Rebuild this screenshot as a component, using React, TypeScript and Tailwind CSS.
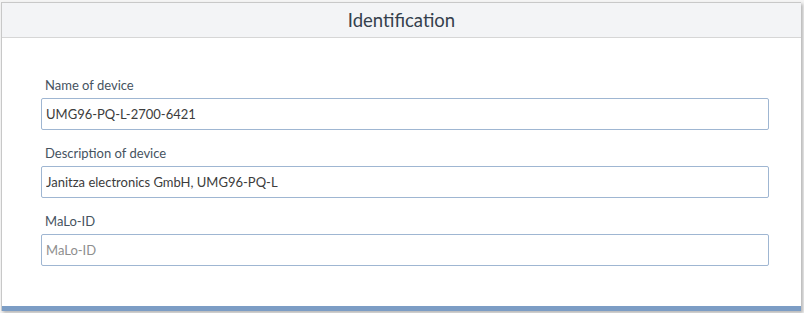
export default function App() {
  const fields = [
    { label: 'Name of device', value: 'UMG96-PQ-L-2700-6421' },
    { label: 'Description of device', value: 'Janitza electronics GmbH, UMG96-PQ-L' },
    { label: 'MaLo-ID', value: '', placeholder: 'MaLo-ID' },
  ];

  return (
    <div className="w-[804px] h-[313px] bg-[#f4f4f4] pt-[2px] pl-[1px] overflow-hidden" style={{ fontFamily: 'Lato, "Open Sans", sans-serif' }}>
      <div className="w-[800px] bg-white border-l border-t border-[#c8c8c8] shadow-[2px_2px_3px_rgba(0,0,0,0.25)] flex flex-col">
        <div className="h-[35px] bg-[#f3f4f6] border-b border-[#d6d6d6] flex items-center justify-center">
          <h2 className="text-[18.5px] text-[#34404c] leading-none">Identification</h2>
        </div>
        <div className="pl-[39px] pr-[32px] pt-[39px] pb-[40px] flex flex-col gap-[15px]">
          {fields.map((f) => (
            <div key={f.label} className="flex flex-col gap-[4px]">
              <label className="pl-[4px] text-[13px] leading-[17px] text-[#46535f]">{f.label}</label>
              <input
                type="text"
                defaultValue={f.value}
                placeholder={f.placeholder}
                className="h-[32px] w-full border border-[#9fb6d2] rounded-[2px] px-[4px] text-[13px] text-[#3c3c3c] placeholder:text-[#8e8e8e] outline-none"
              />
            </div>
          ))}
        </div>
        <div className="h-[5px] bg-[#7c9dc5]" />
      </div>
    </div>
  );
}
